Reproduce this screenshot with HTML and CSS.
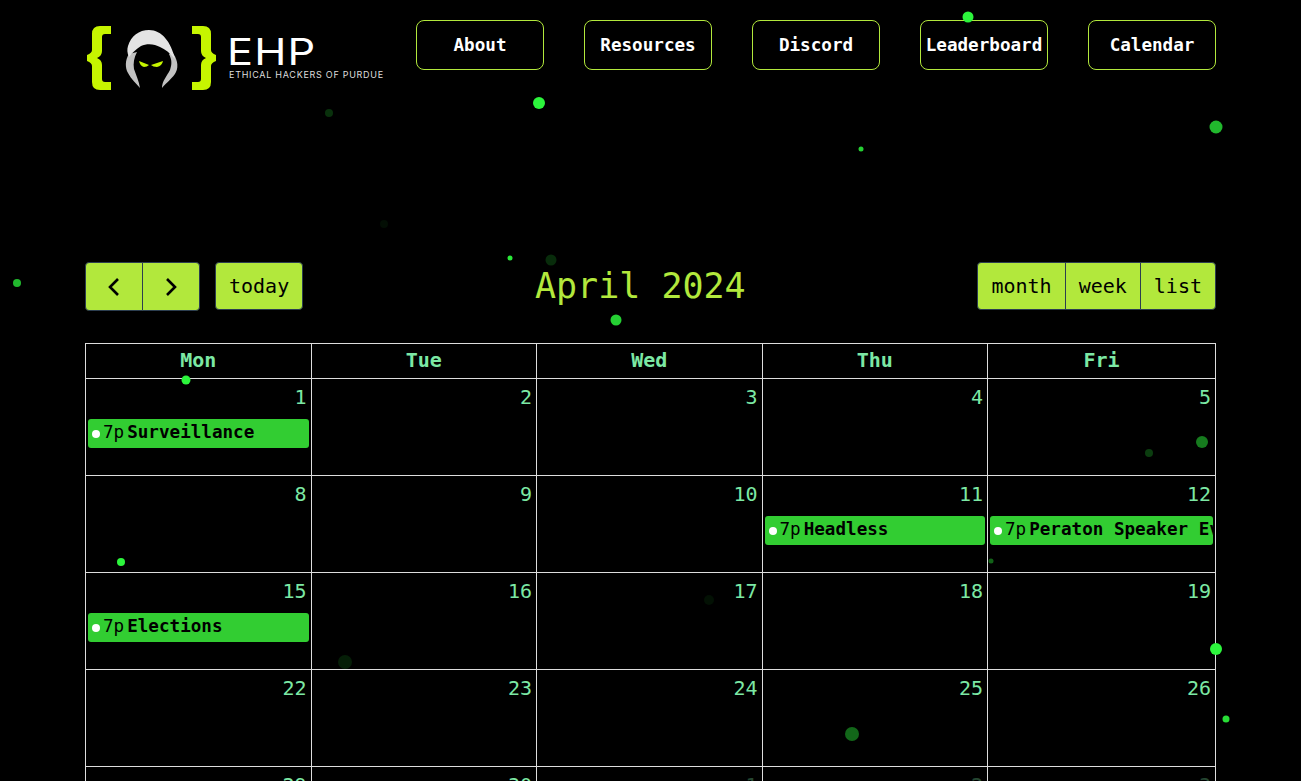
FILE: index.html
```html
<!DOCTYPE html>
<html lang="en">
<head>
    <meta charset="UTF-8">
    <meta name="viewport" content="width=device-width, initial-scale=1.0">
    <title>Calendar - Ethical Hackers of Purdue</title>
    <link rel="stylesheet" href="styles.css">
</head>
<body>
    <div class="page">
        <header class="site-header">
            <a class="logo" href="#">
                <svg class="logo-mark" viewBox="0 0 130 64" width="130" height="64" aria-hidden="true">
                    <path class="brace" d="M24 0H13Q5 0 5 8V24Q5 27 0 29V35Q5 37 5 40V56Q5 64 13 64H24V56H18Q15 56 15 53V39Q15 34 10 32Q15 30 15 25V11Q15 8 18 8H24Z"/>
                    <path class="brace" transform="translate(129 0) scale(-1 1)" d="M24 0H13Q5 0 5 8V24Q5 27 0 29V35Q5 37 5 40V56Q5 64 13 64H24V56H18Q15 56 15 53V39Q15 34 10 32Q15 30 15 25V11Q15 8 18 8H24Z"/>
                    <path class="hood-low" d="M42 28C38 34 38 42 41 47C44 53 49 57 53 62C52 55 49 49 47 43C46 37 47 32 50 26ZM85 26C90 32 92 40 89 46C86 52 80 56 75 62C75 55 80 50 83 44C85 38 85 34 82 28Z"/>
                    <path class="hood-top" d="M41 20C44 10 52 4 62 4C75 4 84 16 88 33C83 27 78 23 73 21C68 18 60 17 54 20C49 23 45 27 42 31C40 27 40 23 41 20Z"/>
                    <path class="eye" d="M52 35L62 39Q60 41 57 41Q53 40 52 35ZM76 35L64 39Q66 41 70 41Q75 40 76 35Z"/>
                </svg>
                <span class="logo-text">
                    <span class="logo-name">EHP</span>
                    <span class="logo-sub">ETHICAL HACKERS OF PURDUE</span>
                </span>
            </a>
            <nav class="main-nav">
                <a href="#">About</a>
                <a href="#">Resources</a>
                <a href="#">Discord</a>
                <a href="#">Leaderboard</a>
                <a href="#">Calendar</a>
            </nav>
        </header>

        <main class="calendar">
            <div class="toolbar">
                <div class="toolbar-left">
                    <div class="btn-group arrows">
                        <button class="fc-btn" aria-label="prev">
                            <svg viewBox="0 0 16 20" width="16" height="20"><path d="M12 2L4 10L12 18"/></svg>
                        </button>
                        <button class="fc-btn" aria-label="next">
                            <svg viewBox="0 0 16 20" width="16" height="20"><path d="M4 2L12 10L4 18"/></svg>
                        </button>
                    </div>
                    <button class="fc-btn today">today</button>
                </div>
                <h2 class="title">April 2024</h2>
                <div class="btn-group">
                    <button class="fc-btn">month</button>
                    <button class="fc-btn">week</button>
                    <button class="fc-btn">list</button>
                </div>
            </div>

            <table class="month">
                <thead>
                    <tr><th>Mon</th><th>Tue</th><th>Wed</th><th>Thu</th><th>Fri</th></tr>
                </thead>
                <tbody>
                    <tr>
                        <td><div class="num">1</div><div class="event"><i></i><span class="time">7p</span><b>Surveillance</b></div></td>
                        <td><div class="num">2</div></td>
                        <td><div class="num">3</div></td>
                        <td><div class="num">4</div></td>
                        <td><div class="num">5</div></td>
                    </tr>
                    <tr>
                        <td><div class="num">8</div></td>
                        <td><div class="num">9</div></td>
                        <td><div class="num">10</div></td>
                        <td><div class="num">11</div><div class="event"><i></i><span class="time">7p</span><b>Headless</b></div></td>
                        <td><div class="num">12</div><div class="event"><i></i><span class="time">7p</span><b>Peraton Speaker Event</b></div></td>
                    </tr>
                    <tr>
                        <td><div class="num">15</div><div class="event"><i></i><span class="time">7p</span><b>Elections</b></div></td>
                        <td><div class="num">16</div></td>
                        <td><div class="num">17</div></td>
                        <td><div class="num">18</div></td>
                        <td><div class="num">19</div></td>
                    </tr>
                    <tr>
                        <td><div class="num">22</div></td>
                        <td><div class="num">23</div></td>
                        <td><div class="num">24</div></td>
                        <td><div class="num">25</div></td>
                        <td><div class="num">26</div></td>
                    </tr>
                    <tr>
                        <td><div class="num">29</div></td>
                        <td><div class="num">30</div></td>
                        <td><div class="num other">1</div></td>
                        <td><div class="num other">2</div></td>
                        <td><div class="num other">3</div></td>
                    </tr>
                </tbody>
            </table>
        </main>
    </div>

    <!-- background particles, free canvas -->
    <svg class="particles" width="1301" height="781" aria-hidden="true">
        <circle cx="968" cy="17" r="5.5" opacity="1"/>
        <circle cx="539" cy="103" r="6" opacity="1"/>
        <circle cx="329" cy="113" r="4" opacity="0.2"/>
        <circle cx="861" cy="149" r="2.5" opacity="0.85"/>
        <circle cx="1216" cy="127" r="6.5" opacity="0.75"/>
        <circle cx="384" cy="224" r="4" opacity="0.06"/>
        <circle cx="510" cy="258" r="2.5" opacity="0.95"/>
        <circle cx="551" cy="260" r="5.5" opacity="0.18"/>
        <circle cx="17" cy="283" r="4" opacity="0.75"/>
        <circle cx="616" cy="320" r="5.5" opacity="0.85"/>
        <circle cx="186" cy="380" r="4.5" opacity="1"/>
        <circle cx="1202" cy="442" r="6" opacity="0.5"/>
        <circle cx="1149" cy="453" r="4" opacity="0.25"/>
        <circle cx="121" cy="562" r="4" opacity="1"/>
        <circle cx="991" cy="561" r="2.5" opacity="0.4"/>
        <circle cx="709" cy="600" r="5" opacity="0.07"/>
        <circle cx="345" cy="662" r="7" opacity="0.12"/>
        <circle cx="1216" cy="649" r="6" opacity="1"/>
        <circle cx="1226" cy="719" r="3.5" opacity="0.9"/>
        <circle cx="852" cy="734" r="7" opacity="0.42"/>
    </svg>
</body>
</html>
```

FILE: styles.css
```css
html, body {
    height: 100%;
    overflow: hidden;
}

body {
    margin: 0;
    background-color: #000;
    color: #fff;
    font-family: "DejaVu Sans Mono", monospace;
    position: relative;
}

.page {
    width: 1131px;
    margin: 0 auto;
}

/* header */
.site-header {
    display: flex;
    justify-content: space-between;
    align-items: flex-start;
    padding-top: 20px;
    height: 262px;
    box-sizing: border-box;
}

.logo {
    display: flex;
    gap: 12px;
    margin: 6px 0 0 2px;
    text-decoration: none;
    color: #fff;
    font-family: Inter, sans-serif;
}

.logo-mark {
    display: block;
}

.brace {
    fill: #c6f500;
}

.hood-top {
    fill: #e4e4e4;
}

.hood-low {
    fill: #c2c2c2;
}

.eye {
    fill: #c6f500;
}

.logo-text {
    display: flex;
    flex-direction: column;
    padding-top: 8px;
}

.logo-name {
    font-size: 37px;
    font-weight: 400;
    line-height: 35px;
    letter-spacing: 1px;
    transform: scaleX(1.17);
    transform-origin: left;
    margin-left: -2px;
}

.logo-sub {
    font-size: 9px;
    line-height: 12px;
    letter-spacing: 0.72px;
    color: #ddd;
    white-space: nowrap;
}

.main-nav {
    display: flex;
    gap: 40px;
}

.main-nav a {
    display: flex;
    align-items: center;
    justify-content: center;
    width: 128px;
    height: 50px;
    box-sizing: border-box;
    border: 1px solid #b2e83c;
    border-radius: 8px;
    color: #fff;
    font-size: 17.6px;
    font-weight: bold;
    text-decoration: none;
}

/* calendar toolbar */
.toolbar {
    display: flex;
    justify-content: space-between;
    align-items: flex-start;
    height: 81px;
}

.toolbar-left {
    display: flex;
    gap: 15px;
}

.title {
    margin: 2px 0 0;
    color: #b2e83c;
    font-size: 35px;
    font-weight: normal;
    line-height: 44px;
}

.btn-group {
    display: flex;
}

.fc-btn {
    display: flex;
    align-items: center;
    justify-content: center;
    height: 48px;
    padding: 0 13px;
    background-color: #b2e83c;
    border: 1px solid #2c3e50;
    border-radius: 4px;
    color: #000;
    font-family: inherit;
    font-size: 20px;
}

.fc-btn svg path {
    fill: none;
    stroke: #000;
    stroke-width: 2.6;
}

.btn-group .fc-btn:not(:first-child) {
    margin-left: -1px;
    border-top-left-radius: 0;
    border-bottom-left-radius: 0;
}

.btn-group .fc-btn:not(:last-child) {
    border-top-right-radius: 0;
    border-bottom-right-radius: 0;
}

.arrows .fc-btn {
    width: 58px;
    height: 49px;
}

/* month grid */
.month {
    width: 1131px;
    table-layout: fixed;
    border-collapse: collapse;
}

.month th,
.month td {
    border: 1px solid #ddd;
    padding: 0;
}

.month th {
    width: 225.5px;
    height: 35px;
    padding-bottom: 2px;
    box-sizing: border-box;
    color: #7ce8a4;
    font-size: 20px;
    font-weight: bold;
}

.month th:last-child {
    width: auto;
}

.month td {
    height: 96px;
    vertical-align: top;
}

.num {
    height: 40px;
    box-sizing: border-box;
    padding: 7px 4px 0 0;
    color: #7ce8a4;
    font-size: 20px;
    line-height: 23px;
    text-align: right;
}

.num.other {
    opacity: 0.3;
}

.event {
    display: flex;
    align-items: center;
    box-sizing: border-box;
    height: 29px;
    margin: 0 2px;
    padding: 0 0 4px 4px;
    background-color: #32cd32;
    border-radius: 3px;
    color: #000;
    font-size: 17.6px;
    white-space: nowrap;
    overflow: hidden;
}

.event i {
    flex: none;
    width: 8px;
    height: 8px;
    margin-top: 4px;
    background-color: #fff;
    border-radius: 50%;
}

.event .time {
    margin: 0 3px;
}

/* particles sit above the grid, clicks go through */
.particles {
    position: absolute;
    top: 0;
    left: 0;
    pointer-events: none;
    fill: #2cf53c;
}
```
